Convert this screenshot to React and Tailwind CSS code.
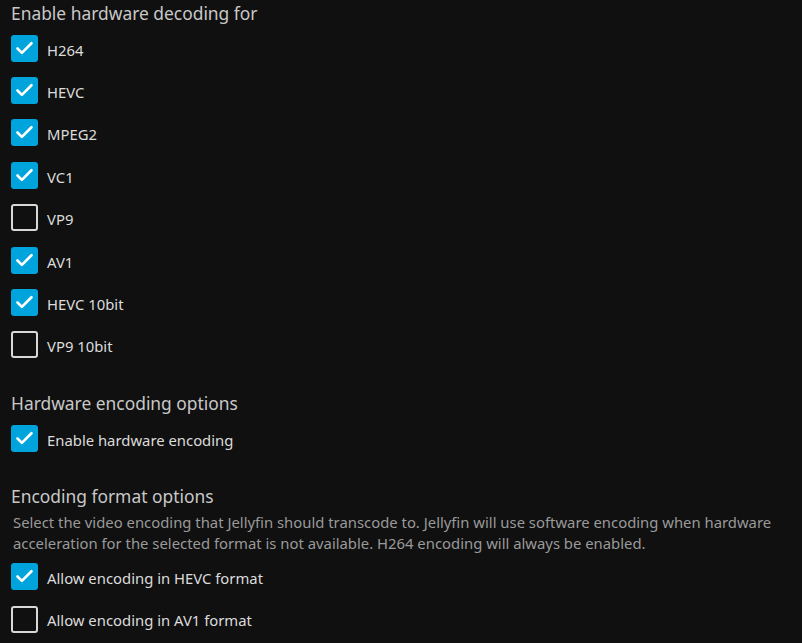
import { Check } from "lucide-react";

const decoders = [
  { name: "H264", on: true },
  { name: "HEVC", on: true },
  { name: "MPEG2", on: true },
  { name: "VC1", on: true },
  { name: "VP9", on: false },
  { name: "AV1", on: true },
  { name: "HEVC 10bit", on: true },
  { name: "VP9 10bit", on: false },
];

function Box({ on, label }) {
  return (
    <label className="flex items-center h-[42.4px]">
      {on ? (
        <span className="w-[27px] h-[27px] rounded-[3px] bg-[#00a4dc] flex items-center justify-center">
          <Check size={21} strokeWidth={3} className="text-white" />
        </span>
      ) : (
        <span className="w-[27px] h-[27px] rounded-[3px] border-2 border-[#d8d8d8]" />
      )}
      <span className="ml-[9px] mt-[3px] text-[14.85px] text-[#dcdcdc]">{label}</span>
    </label>
  );
}

export default function App() {
  return (
    <div
      className="w-[802px] h-[643px] bg-[#101010] px-[11px] overflow-hidden"
      style={{ fontFamily: '"Noto Sans", sans-serif' }}
    >
      <h3 className="text-[17.4px] leading-[27px] text-[#c8c8c8]">Enable hardware decoding for</h3>
      <div className="flex flex-col">
        {decoders.map((d) => (
          <Box key={d.name} on={d.on} label={d.name} />
        ))}
      </div>

      <h3 className="mt-[24px] text-[17.4px] leading-[27px] text-[#c8c8c8]">Hardware encoding options</h3>
      <Box on label="Enable hardware encoding" />

      <h3 className="mt-[23px] text-[17.4px] leading-[27px] text-[#c8c8c8]">Encoding format options</h3>
      <p className="mt-[2px] pl-[2px] text-[14.85px] leading-[21px] text-[#9a9a9a]">
        Select the video encoding that Jellyfin should transcode to. Jellyfin will use software encoding when hardware
        acceleration for the selected format is not available. H264 encoding will always be enabled.
      </p>
      <div className="mt-[2px]">
        <Box on label="Allow encoding in HEVC format" />
        <Box label="Allow encoding in AV1 format" />
      </div>
    </div>
  );
}
